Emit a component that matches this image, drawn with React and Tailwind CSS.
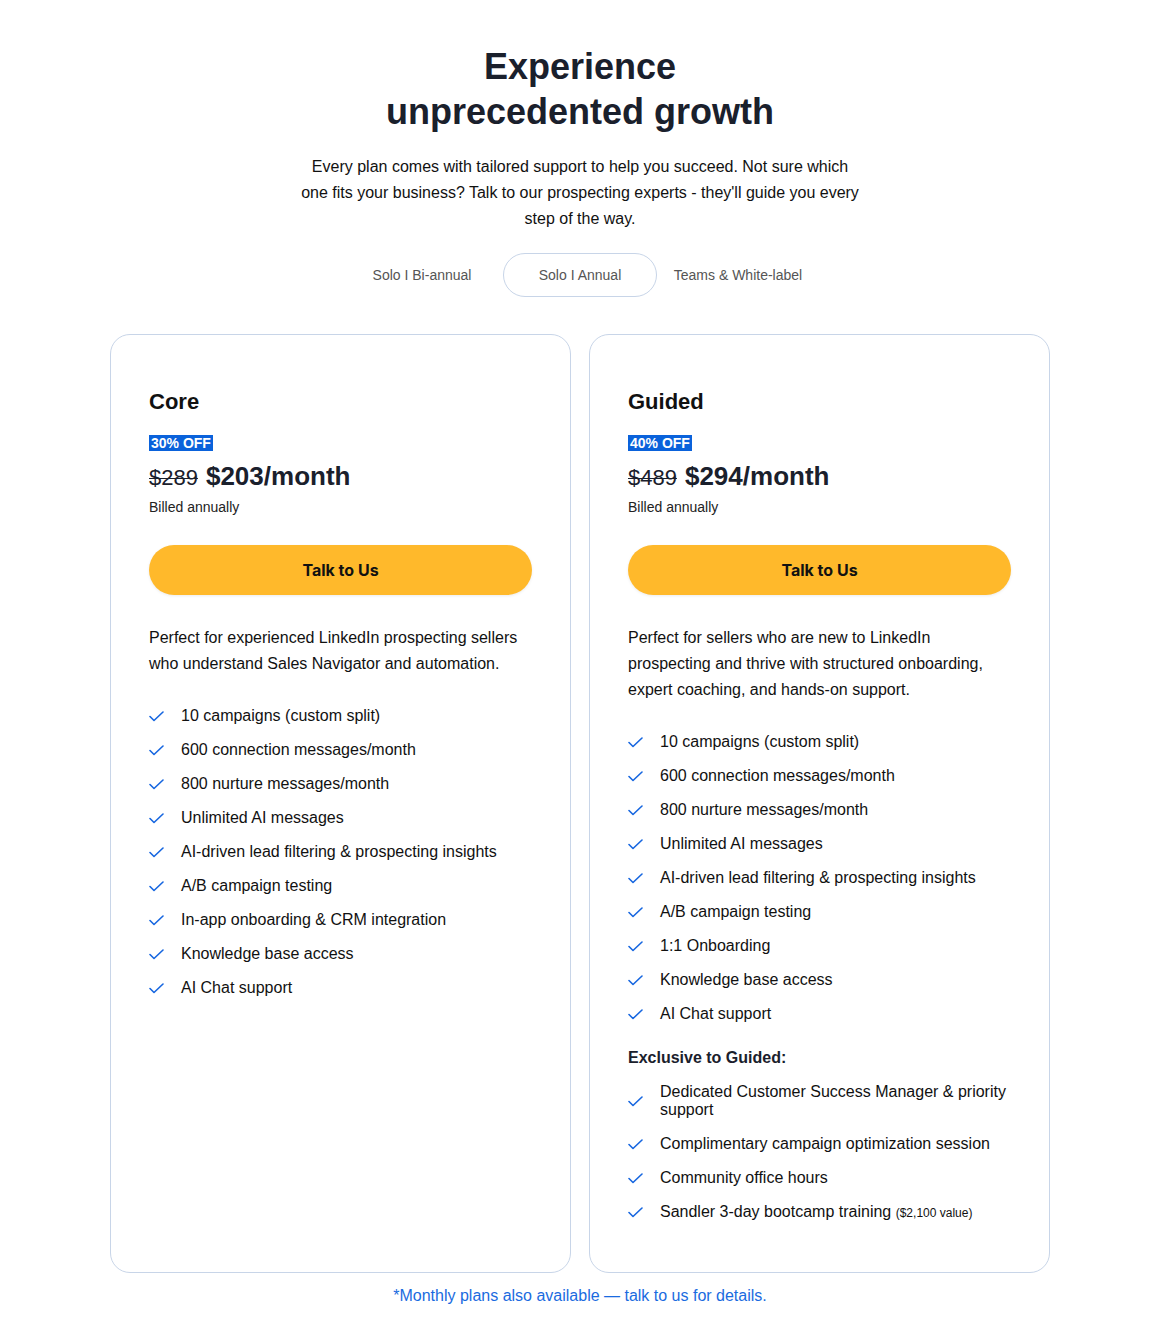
import { useState } from "react";

const coreFeatures = [
  "10 campaigns (custom split)",
  "600 connection messages/month",
  "800 nurture messages/month",
  "Unlimited AI messages",
  "AI-driven lead filtering & prospecting insights",
  "A/B campaign testing",
  "In-app onboarding & CRM integration",
  "Knowledge base access",
  "AI Chat support",
];

const guidedFeatures = [
  "10 campaigns (custom split)",
  "600 connection messages/month",
  "800 nurture messages/month",
  "Unlimited AI messages",
  "AI-driven lead filtering & prospecting insights",
  "A/B campaign testing",
  "1:1 Onboarding",
  "Knowledge base access",
  "AI Chat support",
];

const exclusive = [
  "Dedicated Customer Success Manager & priority support",
  "Complimentary campaign optimization session",
  "Community office hours",
];

function CheckIcon() {
  return (
    <svg width="15" height="11" viewBox="0 0 15 11" fill="none" className="shrink-0">
      <path d="M1 5.5 L5 9.5 L14 1" stroke="#1666e0" strokeWidth="1.6" strokeLinecap="round" strokeLinejoin="round" />
    </svg>
  );
}

function Feature({ children }) {
  return (
    <li className="flex items-center gap-[17px] text-[16px] leading-[18px] text-[#111]">
      <CheckIcon />
      <span>{children}</span>
    </li>
  );
}

function PlanCard({ name, off, oldPrice, price, desc, features, children }) {
  return (
    <div className="flex-1 rounded-[20px] border border-[#c8d5e8] bg-white px-[38px] pt-[54px] pb-[50px]">
      <h2 className="text-[22px] leading-[26px] font-bold text-[#111]">{name}</h2>
      <span className="mt-[20px] block w-fit bg-[#0a62db] px-[2px] text-[14px] leading-[16px] font-bold text-white">{off}</span>
      <div className="mt-[9px] flex items-baseline gap-[8px] leading-[32px]">
        <span className="text-[22px] text-[#1a202c] line-through decoration-1">{oldPrice}</span>
        <span className="text-[26px] font-bold text-[#1a202c]">{price}</span>
      </div>
      <p className="mt-[3px] text-[14px] leading-[20px] text-[#222]">Billed annually</p>
      <button className="mt-[28px] h-[50px] w-full rounded-full bg-[#ffb92b] text-[16px] font-bold text-[#111] shadow-[0_1px_3px_rgba(0,0,0,0.08)] font-['Inter',sans-serif]">
        Talk to Us
      </button>
      <p className="mt-[30px] text-[16px] leading-[26px] text-[#111]">{desc}</p>
      <ul className="mt-[30px] flex flex-col gap-[16px]">
        {features.map((f) => (
          <Feature key={f}>{f}</Feature>
        ))}
      </ul>
      {children}
    </div>
  );
}

export default function App() {
  const [tab, setTab] = useState(1);
  const tabs = ["Solo I Bi-annual", "Solo I Annual", "Teams & White-label"];

  return (
    <div className="min-h-[1340px] bg-white pl-2 font-['Liberation_Sans',Arial,sans-serif]">
      <div className="flex flex-col items-center pt-[44px]">
        <h1 className="text-center text-[36px] leading-[45px] font-bold text-[#1a202c]">
          Experience
          <br />
          unprecedented growth
        </h1>
        <p className="mt-[20px] w-[564px] text-center text-[16px] leading-[26px] text-[#111]">
          Every plan comes with tailored support to help you succeed. Not sure which one fits your business? Talk to our prospecting experts - they'll guide you every step of the way.
        </p>
        <div className="mt-[21px] flex gap-[4px]">
          {tabs.map((t, i) => (
            <button
              key={t}
              onClick={() => setTab(i)}
              className={
                i === tab
                  ? "h-[44px] w-[154px] rounded-full border border-[#c8d5e8] text-[14px] text-[#555]"
                  : "h-[44px] w-[154px] rounded-full border border-transparent text-[14px] text-[#555]"
              }
            >
              {t}
            </button>
          ))}
        </div>

        <div className="mt-[37px] flex w-[940px] gap-[18px]">
          <PlanCard
            name="Core"
            off="30% OFF"
            oldPrice="$289"
            price="$203/month"
            desc="Perfect for experienced LinkedIn prospecting sellers who understand Sales Navigator and automation."
            features={coreFeatures}
          />
          <PlanCard
            name="Guided"
            off="40% OFF"
            oldPrice="$489"
            price="$294/month"
            desc="Perfect for sellers who are new to LinkedIn prospecting and thrive with structured onboarding, expert coaching, and hands-on support."
            features={guidedFeatures}
          >
            <h3 className="mt-[26px] text-[16px] leading-[18px] font-bold text-[#1a202c]">Exclusive to Guided:</h3>
            <ul className="mt-[16px] flex flex-col gap-[16px]">
              {exclusive.map((f) => (
                <Feature key={f}>{f}</Feature>
              ))}
              <Feature>
                Sandler 3-day bootcamp training <span className="text-[12px]">($2,100 value)</span>
              </Feature>
            </ul>
          </PlanCard>
        </div>

        <p className="mt-[13px] text-[16px] leading-[20px] text-[#1a6be0]">
          *Monthly plans also available — talk to us for details.
        </p>
      </div>
    </div>
  );
}
